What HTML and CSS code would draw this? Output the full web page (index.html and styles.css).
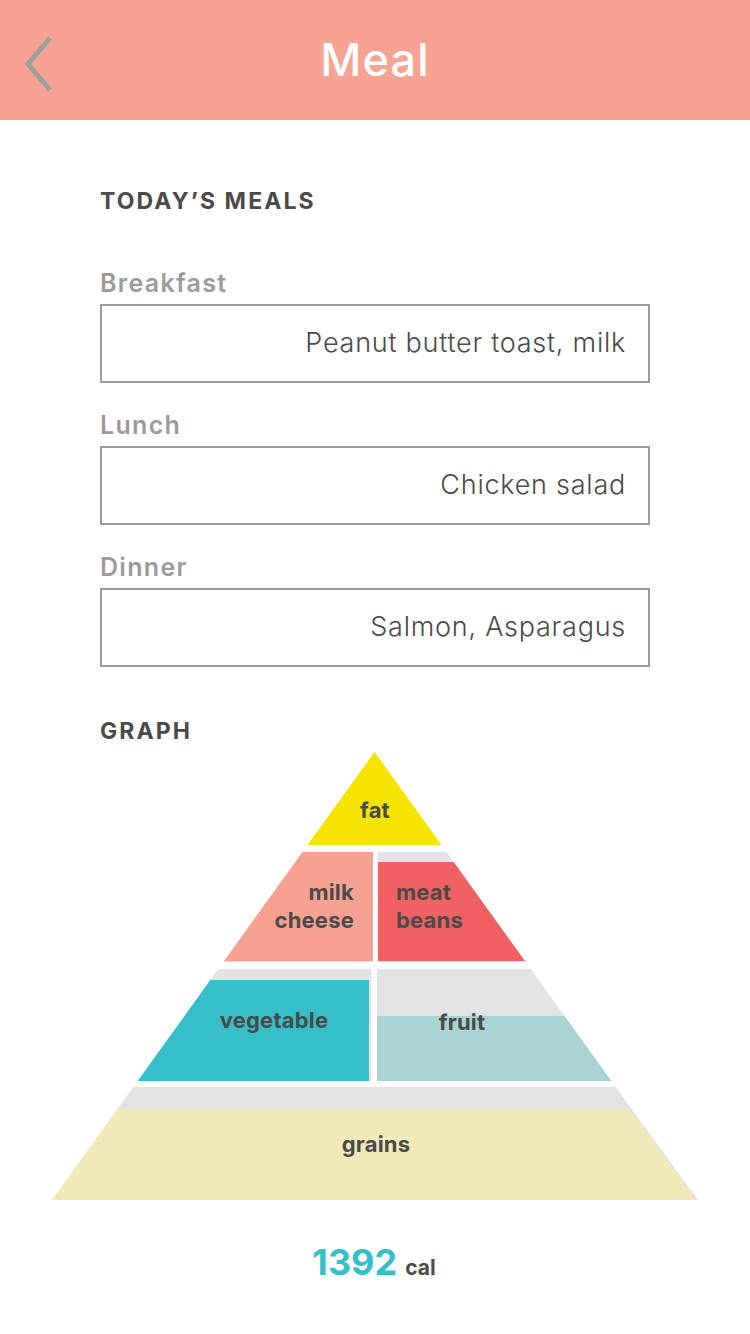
FILE: index.html
```html
<!DOCTYPE html>
<html>
<head>
<meta charset="utf-8">
<link rel="stylesheet" href="styles.css">
</head>
<body>
<header class="header">
  <svg class="back" width="40" height="60" viewBox="0 0 40 60">
    <polyline points="30,4 8,30 30,56" fill="none" stroke="#9e9e9e" stroke-width="5"/>
  </svg>
  <h1 class="title">Meal</h1>
</header>
<main class="content">
  <h2 class="section">TODAY’S MEALS</h2>
  <div class="field">
    <label class="label">Breakfast</label>
    <div class="input">Peanut butter toast, milk</div>
  </div>
  <div class="field">
    <label class="label">Lunch</label>
    <div class="input">Chicken salad</div>
  </div>
  <div class="field">
    <label class="label">Dinner</label>
    <div class="input">Salmon, Asparagus</div>
  </div>
  <h2 class="section graph-title">GRAPH</h2>
</main>
<svg class="pyramid" width="750" height="465" viewBox="0 745 750 465">
  <!-- fat -->
  <polygon points="374.5,752 441.5,845 307.5,845" fill="#f5e300"/>
  <!-- tier 2 backgrounds -->
  <polygon points="302.5,852 373,852 373,962 223.5,962" fill="#e3e3e3"/>
  <polygon points="378,852 446.5,852 525.5,962 378,962" fill="#e3e3e3"/>
  <polygon points="302.5,852 373,852 373,961 224,961" fill="#f7a192"/>
  <polygon points="378,862 453.7,862 525,961 378,961" fill="#f06161"/>
  <!-- tier 3 -->
  <polygon points="218,969 371,969 371,1081 137.7,1081" fill="#e3e3e3"/>
  <polygon points="377,969 530.7,969 611.3,1081 377,1081" fill="#e3e3e3"/>
  <polygon points="210.4,980 369,980 369,1081 137.7,1081" fill="#36bfc9"/>
  <polygon points="377,1016 564.5,1016 611.3,1081 377,1081" fill="#a9d2d3"/>
  <!-- tier 4 -->
  <polygon points="133.3,1087 615.7,1087 698,1200 52,1200" fill="#e3e3e3"/>
  <polygon points="117.5,1109 629,1109 696,1200 52,1200" fill="#f1eab8"/>
  <!-- labels -->
  <g class="plabel">
    <text x="375" y="818" text-anchor="middle">fat</text>
    <text x="354" y="900" text-anchor="end">milk</text>
    <text x="354" y="928" text-anchor="end">cheese</text>
    <text x="396" y="900">meat</text>
    <text x="396" y="928">beans</text>
    <text x="274" y="1028" text-anchor="middle">vegetable</text>
    <text x="462" y="1030" text-anchor="middle">fruit</text>
    <text x="376" y="1152" text-anchor="middle">grains</text>
  </g>
</svg>
<div class="total"><span class="num">1392</span><span class="unit">cal</span></div>
</body>
</html>
```
FILE: styles.css
```css
* { box-sizing: border-box; }
html, body { margin: 0; padding: 0; background: #fff; }
body { width: 750px; font-family: Inter, "Noto Sans", sans-serif; }

.header {
  height: 120px;
  background: #f8a293;
  display: flex;
  align-items: center;
  justify-content: center;
  position: relative;
}
.back {
  position: absolute;
  left: 20px;
  top: 34px;
}
.title {
  margin: 0;
  color: #fff;
  font-family: Inter, "Liberation Sans", sans-serif;
  font-weight: 500;
  font-size: 45px;
  line-height: 60px;
  letter-spacing: 1.2px;
}

.content { padding: 0 100px; }

.section {
  margin: 67px 0 0;
  font-size: 23px;
  line-height: 28px;
  font-weight: 700;
  letter-spacing: 2.1px;
  color: #4a4a4a;
}
.graph-title { margin-top: 50px; }

.field { display: flex; flex-direction: column; margin-top: 27px; }
.section + .field { margin-top: 53px; }

.label {
  font-size: 25px;
  line-height: 30px;
  font-weight: 600;
  letter-spacing: 1.3px;
  color: #9b9b9b;
  margin-bottom: 6px;
}
.input {
  height: 79px;
  border: 2px solid #9b9b9b;
  display: flex;
  align-items: center;
  justify-content: flex-end;
  padding: 0 22px 2px;
  font-size: 27px;
  font-weight: 300;
  letter-spacing: 0.75px;
  color: #4a4a4a;
}

.pyramid { display: block; }
.plabel {
  font-family: Inter, "Noto Sans", sans-serif;
  font-weight: 700;
  font-size: 22px;
  letter-spacing: 0.2px;
  fill: #4a4a4a;
}

.total {
  display: flex;
  justify-content: center;
  align-items: baseline;
  gap: 8px;
  margin-top: 30px;
  padding-right: 2px;
}
.num {
  font-size: 36px;
  font-weight: 700;
  color: #36bfc9;
  line-height: 44px;
}
.unit {
  font-size: 21px;
  font-weight: 700;
  color: #4a4a4a;
}
```
